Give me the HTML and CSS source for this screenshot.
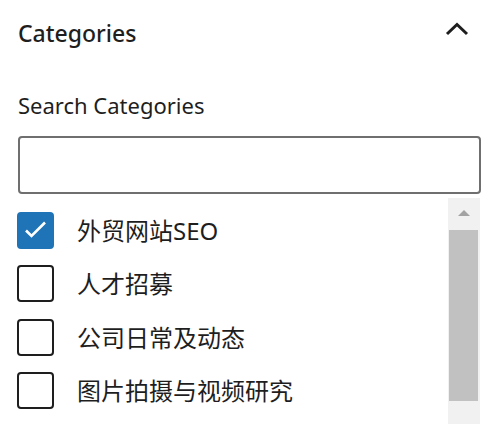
FILE: index.html
```html
<!DOCTYPE html>
<html lang="zh-CN">
<head>
<meta charset="utf-8">
<title>Categories</title>
<link rel="stylesheet" href="styles.css">
</head>
<body>
<div class="panel">
  <div class="panel-header">
    <h2 class="panel-title">Categories</h2>
    <svg class="chevron" width="24" height="14" viewBox="0 0 24 14" aria-hidden="true">
      <polyline points="2,12 12,2.5 22,12" fill="none" stroke="#1e1e1e" stroke-width="3"/>
    </svg>
  </div>
  <label class="search-label" for="search">Search Categories</label>
  <input class="search-input" id="search" type="text">
  <div class="list-wrap">
    <ul class="cat-list">
      <li class="cat-item">
        <span class="box checked">
          <svg width="37" height="37" viewBox="0 0 37 37" aria-hidden="true">
            <polyline points="9,18.5 14.5,24 28,10.5" fill="none" stroke="#fff" stroke-width="2.6"/>
          </svg>
        </span>
        <span class="cat-label">外贸网站SEO</span>
      </li>
      <li class="cat-item"><span class="box"></span><span class="cat-label">人才招募</span></li>
      <li class="cat-item"><span class="box"></span><span class="cat-label">公司日常及动态</span></li>
      <li class="cat-item"><span class="box"></span><span class="cat-label">图片拍摄与视频研究</span></li>
    </ul>
    <div class="scrollbar">
      <div class="sb-button"><span class="sb-arrow"></span></div>
      <div class="sb-thumb"></div>
      <div class="sb-rest"></div>
    </div>
  </div>
</div>
</body>
</html>
```

FILE: styles.css
```css
html, body {
  margin: 0;
  padding: 0;
  background: #fff;
  overflow: hidden;
}
body {
  font-family: "Noto Sans", "Noto Sans CJK SC", sans-serif;
  color: #1e1e1e;
  width: 500px;
  height: 424px;
}
.panel {
  padding: 17px 19px 0 18px;
}
.panel-header {
  display: flex;
  justify-content: space-between;
  align-items: flex-start;
}
.panel-title {
  margin: 0;
  font-size: 23px;
  font-weight: 500;
  line-height: 32px;
}
.chevron {
  margin-top: 5px;
  margin-right: 12px;
  display: block;
}
.search-label {
  display: block;
  margin-top: 41px;
  font-size: 22px;
  line-height: 30px;
  font-weight: 400;
}
.search-input {
  display: block;
  box-sizing: border-box;
  width: 463px;
  height: 58px;
  margin: 16px 0 0 0;
  border: 2px solid #6f6f6f;
  border-radius: 4px;
  background: #fff;
  padding: 0 12px;
}
.list-wrap {
  display: flex;
  margin-top: 4px;
  margin-left: -1px;
  height: 226px;
  overflow: hidden;
}
.cat-list {
  list-style: none;
  margin: 0;
  padding: 14px 0 0 0;
  flex: 1;
  display: flex;
  flex-direction: column;
  gap: 16.33px;
}
.cat-item {
  display: flex;
  align-items: center;
  height: 37px;
}
.box {
  box-sizing: border-box;
  width: 37px;
  height: 37px;
  border: 2px solid #1e1e1e;
  border-radius: 4px;
  background: #fff;
  flex: none;
  display: block;
}
.box.checked {
  border-color: #1f73b7;
  background: #1f73b7;
  position: relative;
}
.box.checked svg {
  position: absolute;
  left: -2px;
  top: -2px;
}
.cat-label {
  margin-left: 23px;
  font-size: 24px;
  line-height: 37px;
  white-space: nowrap;
}
.scrollbar {
  width: 32px;
  margin-right: 1px;
  background: #f1f1f1;
  display: flex;
  flex-direction: column;
  flex: none;
}
.sb-button {
  height: 32px;
  display: flex;
  justify-content: center;
  align-items: center;
}
.sb-arrow {
  width: 0;
  height: 0;
  border-left: 6.5px solid transparent;
  border-right: 6.5px solid transparent;
  border-bottom: 6.5px solid #a3a3a3;
  margin-top: -2px;
}
.sb-thumb {
  height: 171px;
  margin: 0 2px 0 1px;
  background: #c1c1c1;
}
.sb-rest {
  flex: 1;
}
```
